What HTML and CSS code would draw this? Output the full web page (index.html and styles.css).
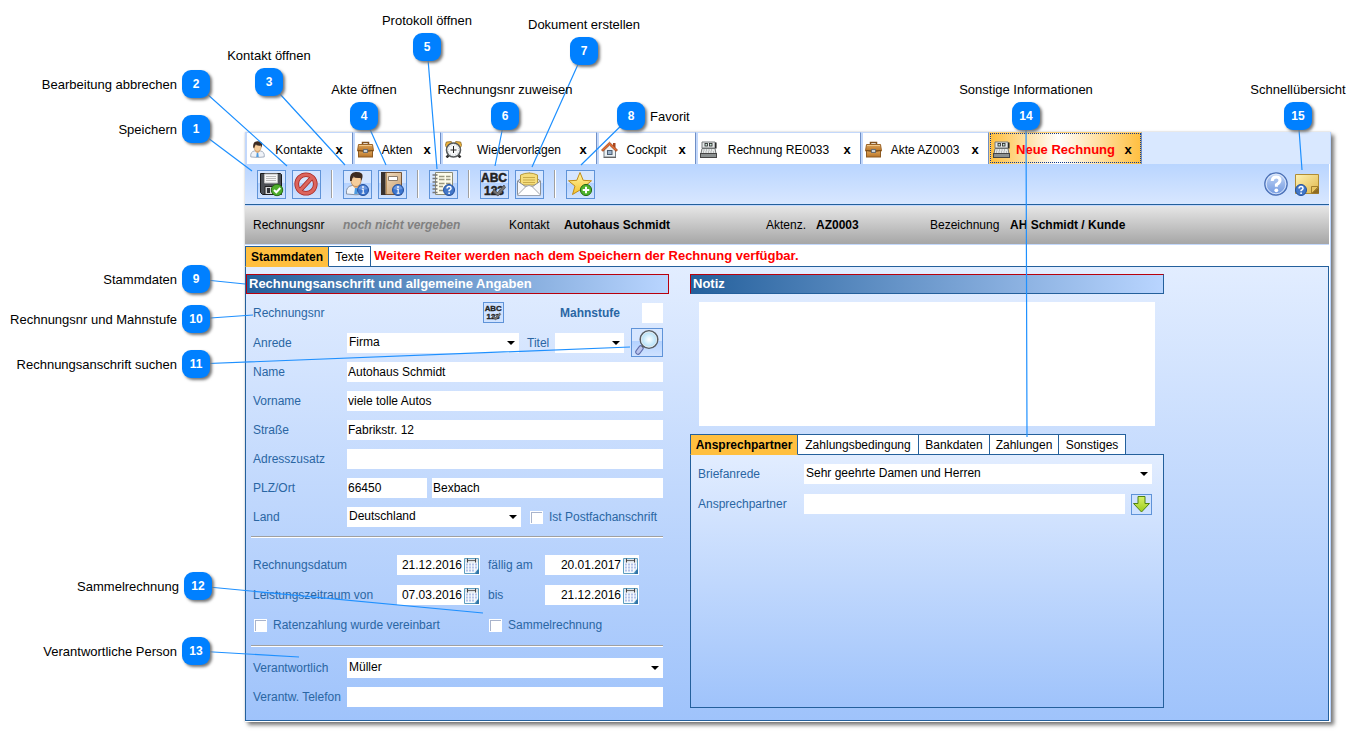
FILE: index.html
```html
<!DOCTYPE html>
<html lang="de">
<head>
<meta charset="utf-8">
<title>Neue Rechnung</title>
<link rel="stylesheet" href="styles.css">
</head>
<body>
<svg class="defs" aria-hidden="true">
  <defs>
    <linearGradient id="g-case" x1="0" y1="0" x2="0" y2="1"><stop offset="0" stop-color="#e0a65a"/><stop offset="1" stop-color="#b87428"/></linearGradient>
    <linearGradient id="g-book" x1="0" y1="0" x2="1" y2="1"><stop offset="0" stop-color="#f3e3ca"/><stop offset="1" stop-color="#c99d6c"/></linearGradient>
    <linearGradient id="g-star" x1="0" y1="0" x2="0" y2="1"><stop offset="0" stop-color="#fff6a8"/><stop offset="1" stop-color="#f5c32c"/></linearGradient>
    <linearGradient id="g-help" x1="0" y1="0" x2="0" y2="1"><stop offset="0" stop-color="#c3d6f5"/><stop offset="1" stop-color="#6f97e0"/></linearGradient>
    <linearGradient id="g-note" x1="0" y1="0" x2="1" y2="1"><stop offset="0" stop-color="#fff3b4"/><stop offset="1" stop-color="#dfb64a"/></linearGradient>
    <linearGradient id="g-arrow" x1="0" y1="0" x2="0" y2="1"><stop offset="0" stop-color="#d8f06a"/><stop offset="1" stop-color="#9ccc1c"/></linearGradient>
    <radialGradient id="g-lens"><stop offset="0" stop-color="#fff"/><stop offset="1" stop-color="#a5dcf8"/></radialGradient>
    <symbol id="i-person" viewBox="0 0 24 24">
      <path d="M2.500 22.500q-1-7.500 5.500-8.500l8 0q6.500 1 5.500 8.500q-9.500 1.500-19 0z" fill="#f0f3f8" stroke="#8593a8"/>
      <path d="M8.500 14l3.500 4 3.500-4-.5-2h-6z" fill="#e9b27c"/>
      <path d="M11 16.500h2l.8 6h-3.600z" fill="#4d9be0"/>
      <path d="M7 6v4q1 5 5 5t5-5v-4z" fill="#f6cd9b" stroke="#b07b48" stroke-width=".7"/>
      <path d="M6 9.500q-1-8.500 5.500-9q8-.3 7 5l-1 4-.8-3q-5.500 .5-7-1.500q-1.500 1-2 4.500z" fill="#3d2b20"/>
    </symbol>
    <symbol id="i-case" viewBox="0 0 17 17">
      <path d="M5.500 3.500v-2h6v2" fill="none" stroke="#80511e" stroke-width="1.500"/>
      <path d="M1.500 3.500h14l1 6.500h-16z" fill="url(#g-case)" stroke="#9b6428"/>
      <rect x="1.500" y="9.500" width="14" height="6.500" fill="url(#g-case)" stroke="#8d5a22"/>
      <path d="M1 9.500l6 1M16 9.500l-6 1" fill="none" stroke="#774b19"/>
      <rect x="6.500" y="8.500" width="4" height="3" fill="#cfd4d8" stroke="#6d6f70"/>
      <path d="M2 4.500h13" stroke="#f0c88b"/>
    </symbol>
    <symbol id="i-clock" viewBox="0 0 17 17">
      <path d="M.3 4.500l1-3.500 5-.5 1 2-5 5zM16.700 4.500l-1-3.500-5-.5-1 2 5 5z" fill="#efb53e" stroke="#7d5b1c" stroke-width=".7"/>
      <path d="M1.500 16.500l3-3M15.500 16.500l-3-3" stroke="#333" stroke-width="2.500"/>
      <circle cx="8.500" cy="9" r="7" fill="#f6f8f9" stroke="#565a5c" stroke-width="1.600"/>
      <circle cx="8.500" cy="9" r="5.200" fill="none" stroke="#b9c1c6" stroke-dasharray="1 1.700"/>
      <path d="M8.500 5v7M5.500 9h6" stroke="#222" fill="none"/>
    </symbol>
    <symbol id="i-house" viewBox="0 0 17 17">
      <path d="M3 8v8h11.500v-8l-6-5z" fill="#edf1f3" stroke="#767e84"/>
      <path d="M12 2h2.500v5l-2.500-2z" fill="#a94720"/>
      <path d="M.5 9l8-7.800 8 7.800-1.500 1.300-6.500-6.200-6.500 6.200z" fill="#e66e32" stroke="#943d15" stroke-width=".8"/>
      <rect x="6.500" y="9.500" width="4.500" height="4" fill="#9bb2cc" stroke="#4d5e70"/>
      <path d="M2.500 16.500h12.500" stroke="#666"/>
    </symbol>
    <symbol id="i-register" viewBox="0 0 17 17">
      <path d="M2 1h13v6h-13z" fill="#e4e7e7" stroke="#777b7c"/>
      <path d="M2 7.500h13l1 5h-15z" fill="#e6e9e9" stroke="#6e7272"/>
      <rect x=".5" y="12.500" width="16" height="4" fill="#8b9090" stroke="#444"/>
      <path d="M3.500 9h10M3 11h11" stroke="#8b8f8f" stroke-dasharray="1 1.500"/>
      <rect x="5" y="2.500" width="2.500" height="2.500" fill="#c7e6d7" stroke="#222" stroke-width=".8"/>
      <rect x="9.500" y="2.500" width="2.500" height="2.500" fill="#c7e6d7" stroke="#222" stroke-width=".8"/>
      <path d="M15.800 1.500v6" stroke="#222" stroke-width="1.500"/>
    </symbol>
    <symbol id="i-info" viewBox="0 0 12 12">
      <circle cx="6" cy="6" r="5.500" fill="#3d76cf" stroke="#23509c"/>
      <path d="M1.500 5q1-3.500 4.500-3.500t4.500 3.500q-4.500 1.500-9 0z" fill="#6b97e0"/>
      <path d="M4.800 5.200h1.400v4M4.700 9.200h2.900" stroke="#fff" stroke-width="1.100" fill="none"/><circle cx="6" cy="3" r=".9" fill="#fff"/>
    </symbol>
    <symbol id="i-ask" viewBox="0 0 12 12">
      <circle cx="6" cy="6" r="5.500" fill="#4277c8" stroke="#23509c"/>
      <path d="M4 4.500q.2-2 2.100-2t2 1.700q0 1.200-2 2.300v.7" stroke="#fff" stroke-width="1.500" fill="none"/><circle cx="6.100" cy="9.200" r=".9" fill="#fff"/>
    </symbol>
    <symbol id="i-calendar" viewBox="0 0 15 17">
      <path d="M.5 1.500h14v10.500l-4 4.500h-10z" fill="#f6fafd" stroke="#5c9ec2"/>
      <path d="M1 2h13v3.500h-13z" fill="#dde3e8"/>
      <path d="M3 3.500h9" stroke="#666"/><path d="M3.500 1.500v4M11.500 1.500v4" stroke="#444"/>
      <path d="M2 7.500h11M2 10.500h11M2 13.500h8" stroke="#b3c2ea" stroke-width="2" stroke-dasharray="2 1"/>
      <path d="M15 11v6h-6q4-.5 3.500-3.500q1.500 0 2.500-2.500z" fill="#2e74a8"/>
      <path d="M10 16q2-1 1.700-3.700q1.500.7 2.500-.3z" fill="#d6e9f4"/>
    </symbol>
    <symbol id="i-number" viewBox="0 0 29 29">
      <text x="14" y="12" class="abc">ABC</text>
      <text x="14" y="25" class="abc">123</text>
      <path d="M13.500 19l4 3.500 6.500-7.500 1.500 2.500-7.500 8.500-5-4z" fill="#777" stroke="#444" stroke-width=".7"/>
    </symbol>
  </defs>
</svg>

<main class="window">
  <nav class="tabs" aria-label="Geöffnete Fenster">
    <div class="tab tab-contacts"><svg class="tab-icon"><use href="#i-person"/></svg><button class="tab-label">Kontakte</button><button class="close" aria-label="Kontakte schließen">x</button></div>
    <div class="tab tab-files"><svg class="tab-icon"><use href="#i-case"/></svg><button class="tab-label">Akten</button><button class="close" aria-label="Akten schließen">x</button></div>
    <div class="tab tab-reminders"><svg class="tab-icon"><use href="#i-clock"/></svg><button class="tab-label">Wiedervorlagen</button><button class="close" aria-label="Wiedervorlagen schließen">x</button></div>
    <div class="tab tab-cockpit"><svg class="tab-icon"><use href="#i-house"/></svg><button class="tab-label">Cockpit</button><button class="close" aria-label="Cockpit schließen">x</button></div>
    <div class="tab tab-invoice"><svg class="tab-icon"><use href="#i-register"/></svg><button class="tab-label">Rechnung RE0033</button><button class="close" aria-label="Rechnung schließen">x</button></div>
    <div class="tab tab-file"><svg class="tab-icon"><use href="#i-case"/></svg><button class="tab-label">Akte AZ0003</button><button class="close" aria-label="Akte schließen">x</button></div>
    <div class="tab tab-new"><svg class="tab-icon"><use href="#i-register"/></svg><button class="tab-label">Neue Rechnung</button><button class="close" aria-label="Neue Rechnung schließen">x</button></div>
  </nav>

  <div class="toolbar">
    <button class="tool" aria-label="Speichern"><svg viewBox="0 0 27 27">
      <path d="M3 2.500h19.500l1 1v20h-19l-2-2v-19z" fill="#4c4f54" stroke="#18191b"/>
      <path d="M6.500 3h13v9h-13z" fill="#f7f7f7" stroke="#bbb"/><path d="M8 5.500h10M8 7.500h10M8 9.500h10" stroke="#bbb"/>
      <path d="M7 15.500h12v8h-12z" fill="#d6d7d9" stroke="#222"/><path d="M9 17h3v5h-3z" fill="#303236"/>
      <circle cx="19" cy="19" r="5.700" fill="#4fae2b" stroke="#276b15"/><path d="M16 19l2.300 2.300 4-4.300" stroke="#fff" stroke-width="2" fill="none"/></svg></button>
    <button class="tool" aria-label="Bearbeitung abbrechen"><svg viewBox="0 0 27 27">
      <circle cx="13" cy="13" r="9.300" fill="none" stroke="#a62722" stroke-width="4.600"/><path d="M7 19.500l12-13" stroke="#a62722" stroke-width="4.600"/>
      <circle cx="13" cy="13" r="9.300" fill="none" stroke="#dc655d" stroke-width="3"/><path d="M7 19.500l12-13" stroke="#dc655d" stroke-width="3"/></svg></button>
    <span class="divider"></span>
    <button class="tool" aria-label="Kontakt öffnen"><svg viewBox="0 0 27 27"><use href="#i-person" x="0" y="0" width="24" height="25"/><use href="#i-info" x="13" y="13" width="12" height="12"/></svg></button>
    <button class="tool" aria-label="Akte öffnen"><svg viewBox="0 0 27 27">
      <path d="M2.500 1.500h20v22h-20z" fill="url(#g-book)" stroke="#765536"/><path d="M2 1h4.500v23h-4.500z" fill="#38312d"/>
      <path d="M9.500 5.500h9v4h-9z" fill="#fff" stroke="#8a7b6b"/><path d="M7.500 2v21" stroke="#bd935f"/>
      <use href="#i-info" x="13" y="13" width="12" height="12"/></svg></button>
    <span class="divider"></span>
    <button class="tool" aria-label="Protokoll öffnen"><svg viewBox="0 0 27 27">
      <path d="M5.500 1.500h17v22h-17z" fill="#fdfbe9" stroke="#8e8d76"/>
      <path d="M2.500 4h5M2.500 7.500h5M2.500 11h5M2.500 14.500h5M2.500 18h5M2.500 21.500h5" stroke="#777" stroke-width="1.600"/>
      <path d="M9 5.500h5.500M16 5.500h4.500M9 8.500h5.500M16 8.500h4.500M9 12.500h5.500M16 12.500h4.500M9 15.500h4M9 19.500h4" stroke="#9a9880" stroke-width="1.500"/>
      <use href="#i-ask" x="13" y="13" width="12" height="12"/></svg></button>
    <span class="divider"></span>
    <button class="tool" aria-label="Rechnungsnr zuweisen"><svg viewBox="1 1 27 27"><use href="#i-number" width="29" height="29"/></svg></button>
    <button class="tool" aria-label="Dokument erstellen"><svg viewBox="0 0 27 27">
      <path d="M1.500 10l12-8 11 8v14h-23z" fill="#d9dde2" stroke="#8b9097"/>
      <path d="M4.500 4q8.500-4 17 0v10h-17z" fill="#f5dd7c" stroke="#b79a3c"/><path d="M7 6.500h12M7 9h12M7 11.500h12" stroke="#c9ab4a"/>
      <path d="M1.500 10l8.500 6h6l8.500-6v14h-23z" fill="#f7f8fa" stroke="#8b9097"/><path d="M1.500 24l8.500-8.500q3-2 6 0l8.500 8.500" fill="#fff" stroke="#a0a4aa"/></svg></button>
    <span class="divider"></span>
    <button class="tool" aria-label="Favorit"><svg viewBox="0 0 27 27">
      <path d="M13 1.500l3.200 7.800 8.300.5-6.500 5.300 2.200 8.400-7.200-4.500-7.500 4.500 2.500-8.400-6.500-5.300 8.300-.5z" fill="url(#g-star)" stroke="#c08c18" stroke-linejoin="round"/>
      <circle cx="19" cy="19" r="5.600" fill="#4eb32b" stroke="#276b15"/><path d="M19 15.700v6.600M15.700 19h6.600" stroke="#fff" stroke-width="2"/></svg></button>
    <button class="plain help" aria-label="Hilfe"><svg viewBox="0 0 24 24">
      <circle cx="12" cy="12" r="11.200" fill="url(#g-help)" stroke="#4a6fb4" stroke-width="1.200"/><circle cx="12" cy="12" r="9.800" fill="none" stroke="#e6effc" stroke-width=".8"/>
      <path d="M8.200 9q.2-4 4-4t3.800 3.200q0 2.300-3.600 4.500v2" stroke="#fff" stroke-width="3" fill="none"/><circle cx="12.300" cy="18.300" r="1.900" fill="#fff"/></svg></button>
    <button class="plain note" aria-label="Schnellübersicht"><svg viewBox="0 0 26 24">
      <path d="M1.500 2.500h23v19h-23z" fill="url(#g-note)" stroke="#b08c35"/><path d="M25 15v6.500h-7.500z" fill="#8d6b22"/><path d="M17.500 21.500v-7h7z" fill="#e9c662" stroke="#a37f2c"/>
      <use href="#i-ask" x="1" y="12" width="12" height="12"/></svg></button>
  </div>

  <div class="info">
    <span>Rechnungsnr</span><em>noch nicht vergeben</em>
    <span>Kontakt</span><strong>Autohaus Schmidt</strong>
    <span>Aktenz.</span><strong>AZ0003</strong>
    <span>Bezeichnung</span><strong>AH Schmidt / Kunde</strong>
  </div>

  <div class="pages">
    <button class="page current">Stammdaten</button><button class="page">Texte</button>
    <p class="hint">Weitere Reiter werden nach dem Speichern der Rechnung verfügbar.</p>
  </div>

  <div class="panel">
    <section>
      <h2 class="heading">Rechnungsanschrift und allgemeine Angaben</h2>
      <form class="form">
        <div class="row row-number">
          <span class="name">Rechnungsnr</span>
          <button type="button" class="small number" aria-label="Rechnungsnr zuweisen"><svg viewBox="0 0 29 29"><use href="#i-number" width="29" height="29"/></svg></button>
          <label class="level" for="level">Mahnstufe</label><input class="level-box" id="level">
        </div>
        <div class="row row-search">
          <label class="name" for="salutation">Anrede</label>
          <span class="select grow"><select id="salutation"><option>Firma</option></select></span>
          <label class="title-name" for="title">Titel</label>
          <span class="select title"><select id="title"><option></option></select></span>
          <button type="button" class="search" aria-label="Rechnungsanschrift suchen"><svg viewBox="0 0 30 27">
            <path d="M9 19l-3 4" stroke="#5f6caa" stroke-width="5.500" stroke-linecap="round"/><path d="M9 19l-3 4" stroke="#b9c3ec" stroke-width="3.500" stroke-linecap="round"/><path d="M12 16l-2 2" stroke="#555" stroke-width="2"/>
            <circle cx="17" cy="10.500" r="8.800" fill="url(#g-lens)" stroke="#5a5d62" stroke-width="1.500"/><circle cx="17" cy="10.500" r="7.500" fill="none" stroke="#e6e9ec"/></svg></button>
        </div>
        <div class="rows">
          <div class="row"><label class="name" for="name">Name</label><input class="grow" id="name" value="Autohaus Schmidt"></div>
          <div class="row"><label class="name" for="first">Vorname</label><input class="grow" id="first" value="viele tolle Autos"></div>
          <div class="row"><label class="name" for="street">Straße</label><input class="grow" id="street" value="Fabrikstr. 12"></div>
          <div class="row"><label class="name" for="extra">Adresszusatz</label><input class="grow" id="extra"></div>
          <div class="row"><label class="name" for="zip">PLZ/Ort</label><input class="zip" id="zip" value="66450"><input class="grow" aria-label="Ort" value="Bexbach"></div>
          <div class="row"><label class="name" for="country">Land</label><span class="select grow"><select id="country"><option>Deutschland</option></select></span>
            <label class="check postbox"><input type="checkbox">Ist Postfachanschrift</label></div>
        </div>
        <hr>
        <div class="rows dates">
          <div class="row"><label class="date-name" for="d1">Rechnungsdatum</label><span class="date"><input id="d1" value="21.12.2016"><button type="button" aria-label="Kalender"><svg><use href="#i-calendar"/></svg></button></span>
            <label class="until" for="d2">fällig am</label><span class="date wide"><input id="d2" value="20.01.2017"><button type="button" aria-label="Kalender"><svg><use href="#i-calendar"/></svg></button></span></div>
          <div class="row"><label class="date-name" for="d3">Leistungszeitraum von</label><span class="date"><input id="d3" value="07.03.2016"><button type="button" aria-label="Kalender"><svg><use href="#i-calendar"/></svg></button></span>
            <label class="until" for="d4">bis</label><span class="date wide"><input id="d4" value="21.12.2016"><button type="button" aria-label="Kalender"><svg><use href="#i-calendar"/></svg></button></span></div>
          <div class="row"><label class="check rates"><input type="checkbox">Ratenzahlung wurde vereinbart</label><label class="check"><input type="checkbox">Sammelrechnung</label></div>
        </div>
        <hr>
        <div class="rows person">
          <div class="row"><label class="name" for="resp">Verantwortlich</label><span class="select grow"><select id="resp"><option>Müller</option></select></span></div>
          <div class="row"><label class="name" for="phone">Verantw. Telefon</label><input class="grow" id="phone"></div>
        </div>
      </form>
    </section>

    <section class="side">
      <h2 class="heading">Notiz</h2>
      <textarea class="memo" aria-label="Notiz"></textarea>
      <div class="subtabs">
        <button class="page current sub-contact">Ansprechpartner</button><button class="page sub-terms">Zahlungsbedingung</button><button class="page sub-bank">Bankdaten</button><button class="page sub-payments">Zahlungen</button><button class="page sub-other">Sonstiges</button>
      </div>
      <div class="subpanel">
        <div class="row"><label class="sub-name" for="greeting">Briefanrede</label><span class="select grow"><select id="greeting"><option>Sehr geehrte Damen und Herren</option></select></span></div>
        <div class="row"><label class="sub-name" for="contact">Ansprechpartner</label><input class="grow" id="contact">
          <button class="small down" aria-label="Übernehmen"><svg viewBox="0 0 19 19"><path d="M6 1.500h7v7h4.500l-8 8.500-8-8.500h4.500z" fill="url(#g-arrow)" stroke="#4f8213" stroke-linejoin="round"/></svg></button></div>
      </div>
    </section>
  </div>
</main>

<aside class="callouts" aria-label="Legende">
  <svg class="lines" viewBox="0 0 1364 732" aria-hidden="true">
    <path d="M196 129L252 171M196 84L287 166M269 82L345 165M364 116L386 165M427 47L437 169M505 116L495 166M584 51L532 167M631 116L581 165M196 279L245 284M196 319L253 315M196 364L630 347M198 586L483 613M196 651L299 657M1026 116L1027 437M1298 116L1302 170"/>
  </svg>
  <div class="callout c1"><b>1</b><span>Speichern</span></div>
  <div class="callout c2"><b>2</b><span>Bearbeitung abbrechen</span></div>
  <div class="callout above c3"><b>3</b><span>Kontakt öffnen</span></div>
  <div class="callout above c4"><b>4</b><span>Akte öffnen</span></div>
  <div class="callout above c5"><b>5</b><span>Protokoll öffnen</span></div>
  <div class="callout above c6"><b>6</b><span>Rechnungsnr zuweisen</span></div>
  <div class="callout above c7"><b>7</b><span>Dokument erstellen</span></div>
  <div class="callout after c8"><b>8</b><span>Favorit</span></div>
  <div class="callout c9"><b>9</b><span>Stammdaten</span></div>
  <div class="callout c10"><b>10</b><span>Rechnungsnr und Mahnstufe</span></div>
  <div class="callout c11"><b>11</b><span>Rechnungsanschrift suchen</span></div>
  <div class="callout c12"><b>12</b><span>Sammelrechnung</span></div>
  <div class="callout c13"><b>13</b><span>Verantwortliche Person</span></div>
  <div class="callout above c14"><b>14</b><span>Sonstige Informationen</span></div>
  <div class="callout above c15"><b>15</b><span>Schnellübersicht</span></div>
</aside>
</body>
</html>
```
FILE: styles.css
```css
* { box-sizing: border-box; }
body {
  margin: 0;
  padding: 132px 33px 9px 245px;
  position: relative;
  background: #fff;
  color: #000;
  font: 12px/20px "Liberation Sans", Arial, sans-serif;
}
button, input, select, textarea {
  font: inherit;
  color: inherit;
  margin: 0;
  padding: 0;
  border: 0;
  border-radius: 0;
  background: none;
  outline: none;
}
.defs { position: absolute; width: 0; height: 0; }
.abc { font: bold 12px "Liberation Sans", Arial, sans-serif; fill: #222; stroke: #222; stroke-width: 0.5; text-anchor: middle; }

.window {
  background: #fff;
  border-right: 1px solid #b9d5ff;
  padding-right: 1px;
  padding-bottom: 1px;
  box-shadow: 3px 3px 4px #777, 0 0 2px #ccc;
}

.tabs { display: flex; height: 32px; background: #d9e8ff; margin-right: -1px; }
.tab {
  display: flex;
  align-items: center;
  flex: none;
  padding: 2px 6px 0 2px;
  background: #fff;
  border-left: 2px solid #c3d8fb;
  border-top: 1px solid #c3d8fb;
  border-right: 1px solid #6f8fc6;
}
.tab-icon { width: 17px; height: 17px; flex: none; }
.tab-label { flex: 1; text-align: center; white-space: nowrap; }
.close { width: 14px; font-weight: bold; font-size: 13px; flex: none; }
.tab-contacts { width: 108px; }
.tab-files { width: 88px; }
.tab-reminders { width: 156px; }
.tab-cockpit { width: 99px; }
.tab-invoice { width: 165px; }
.tab-file { width: 128px; }
.tab-new {
  width: 153px;
  background: linear-gradient(90deg, #ffbf3f, #fff 45%, #ffbf3f);
  outline: 1px dotted #123a8c;
  outline-offset: -2px;
  border-color: #ffcf70 #6f8fc6 #ffcf70 #ffcf70;
}
.tab-new .tab-label { color: #f00; font-weight: bold; font-size: 13px; }

.toolbar {
  display: flex;
  align-items: center;
  gap: 6px;
  height: 41px;
  padding: 0 9px 0 12px;
  background: linear-gradient(#b9d5ff, #d8e7ff);
  border-bottom: 1px solid #24609c;
}
.tool {
  width: 29px;
  height: 29px;
  flex: none;
  border: 1px solid #5f93d8;
  background: linear-gradient(#d6e6ff 45%, #b4d2ff 45%, #cfe2ff);
}
.tool svg, .plain svg, .small svg, .search svg { display: block; width: 100%; height: 100%; }
.divider { width: 2px; height: 28px; margin: 0 4px; background: #a0a0a0; border-right: 1px solid #fff; }
.plain { flex: none; height: 24px; }
.help { width: 24px; margin-left: auto; }
.note { width: 26px; }

.info {
  display: grid;
  grid-template-columns: 90fr 166fr 55fr 202fr 50fr 114fr 80fr 319fr;
  align-items: center;
  height: 40px;
  padding-left: 8px;
  background: linear-gradient(#e6e6e6, #a6a6a6);
  border-top: 1px solid #c3d8fb;
  border-bottom: 1px solid #c3d8fb;
  white-space: nowrap;
}
.info em { color: #808080; font-weight: bold; }

.pages { display: flex; height: 21px; padding-top: 1px; }
.page {
  flex: none;
  width: 42px;
  height: 21px;
  border: 1px solid #24609c;
  border-left: 0;
  background: #fff;
  white-space: nowrap;
  position: relative;
}
.current { width: 84px; border-left: 1px solid #24609c; border-bottom-color: #ffbf3f; background: #ffbf3f; font-weight: bold; }
.hint { margin: 0 0 0 3px; color: #f00; font-weight: bold; font-size: 13px; white-space: nowrap; }

.panel {
  display: grid;
  grid-template-columns: 423fr 474fr 143fr;
  gap: 21px;
  padding: 7px 0 12px;
  border: 1px solid #24609c;
  background: linear-gradient(#e2edff, #9fc3fb);
}
.heading {
  margin: 0;
  height: 20px;
  padding-left: 2px;
  border: 1px solid #b8000c;
  background: linear-gradient(90deg, #24609c, #b9d5ff);
  color: #fff;
  font-size: 13px;
  line-height: 17px;
  white-space: nowrap;
}
.side .heading { border-right-color: #24609c; border-bottom-color: #24609c; }

.form { padding: 8px 6px 0 7px; color: #2a66a3; }
.row { display: flex; align-items: center; height: 20px; white-space: nowrap; }
.rows { display: grid; gap: 9px; }
.row-number { height: 21px; margin-bottom: 5px; }
.row-search { height: 29px; margin-bottom: 5px; }
.name { width: 94px; flex: none; }
.grow { flex: 1; min-width: 0; }
.row input, .select, .date { height: 20px; background: #fff; color: #000; }
.row input { padding-left: 1px; }
.select { display: block; position: relative; }
.select select { display: block; appearance: none; width: 100%; height: 20px; padding: 0 16px 2px 2px; line-height: 18px; }
.select::after {
  content: "";
  position: absolute;
  right: 4px;
  top: 8px;
  border: 4px solid transparent;
  border-top-color: #000;
  border-bottom: 0;
}
.small { width: 21px; height: 21px; flex: none; border: 1px solid #5f93d8; background: #cfe2ff; color: #000; }
.number { margin-left: 136px; }
.level { width: 82px; margin-left: auto; font-weight: bold; }
.level-box { width: 21px; }
.title-name { width: 28px; margin-left: 8px; }
.title { width: 69px; }
.search { width: 32px; height: 29px; margin-left: 7px; border: 1px solid #5f93d8; background: linear-gradient(#d6e6ff 45%, #b4d2ff 45%, #cfe2ff); }
.zip { width: 80px; margin-right: 5px; }
.check { display: flex; align-items: center; gap: 6px; padding-left: 1px; }
.row .check input { appearance: none; width: 13px; height: 13px; flex: none; padding: 0; border: 1px solid #fff; box-shadow: inset 1px 1px #a9b4cc; }
.postbox { width: 134px; margin-left: 8px; }
.rates { width: 235px; }
hr { height: 2px; margin: 9px 0 17px -2px; border: 0; background: #a0a0a0; border-bottom: 1px solid #fff; }
.dates { gap: 10px; }
.dates + hr { margin: 10px 0 11px -2px; }
.date-name { width: 144px; flex: none; }
.date { display: flex; align-items: center; width: 83px; padding-right: 1px; }
.date input { flex: 1; min-width: 0; text-align: right; padding: 0 2px 0 0; }
.date button { width: 15px; height: 17px; flex: none; }
.date svg { display: block; width: 15px; height: 17px; }
.wide { width: 94px; }
.until { width: 57px; margin-left: 8px; }

.memo { display: block; width: calc(100% - 18px); height: 124px; margin: 8px 9px; background: #fff; resize: none; }
.subtabs { display: flex; height: 20px; }
.sub-contact { width: 108px; }
.sub-terms { width: 121px; }
.sub-bank { width: 71px; }
.sub-payments { width: 69px; }
.sub-other { width: 67px; }
.subpanel {
  display: grid;
  align-content: start;
  gap: 10px;
  height: 254px;
  padding: 9px 11px 0 7px;
  border: 1px solid #24609c;
  background: linear-gradient(#e2edff, #9fc3fb);
  color: #2a66a3;
}
.sub-name { width: 106px; flex: none; }
.down { margin-left: 6px; }

.callouts { position: absolute; left: 0; top: 0; font-size: 13px; line-height: 16px; pointer-events: none; }
.lines { position: absolute; left: 0; top: 0; width: 1364px; height: 732px; fill: none; stroke: #1e90ff; stroke-width: 1.2; }
.callout { position: absolute; width: 28px; height: 28px; }
.callout b {
  display: block;
  height: 28px;
  border-radius: 9px;
  background: #0080ff;
  box-shadow: 2px 2px 3px #777;
  color: #fff;
  font-size: 12px;
  line-height: 28px;
  text-align: center;
}
.callout span { position: absolute; right: 33px; top: 7px; white-space: nowrap; }
.above span { right: auto; left: 50%; top: -20px; transform: translateX(-50%); }
.after span { right: auto; left: 33px; }
.c1 { left: 182px; top: 115px; }
.c2 { left: 182px; top: 70px; }
.c3 { left: 255px; top: 68px; }
.c4 { left: 350px; top: 102px; }
.c5 { left: 413px; top: 33px; }
.c6 { left: 491px; top: 102px; }
.c7 { left: 570px; top: 37px; }
.c8 { left: 617px; top: 102px; }
.c9 { left: 182px; top: 265px; }
.c10 { left: 182px; top: 305px; }
.c11 { left: 182px; top: 350px; }
.c12 { left: 184px; top: 572px; }
.c13 { left: 182px; top: 637px; }
.c14 { left: 1012px; top: 102px; }
.c15 { left: 1284px; top: 102px; }
```
